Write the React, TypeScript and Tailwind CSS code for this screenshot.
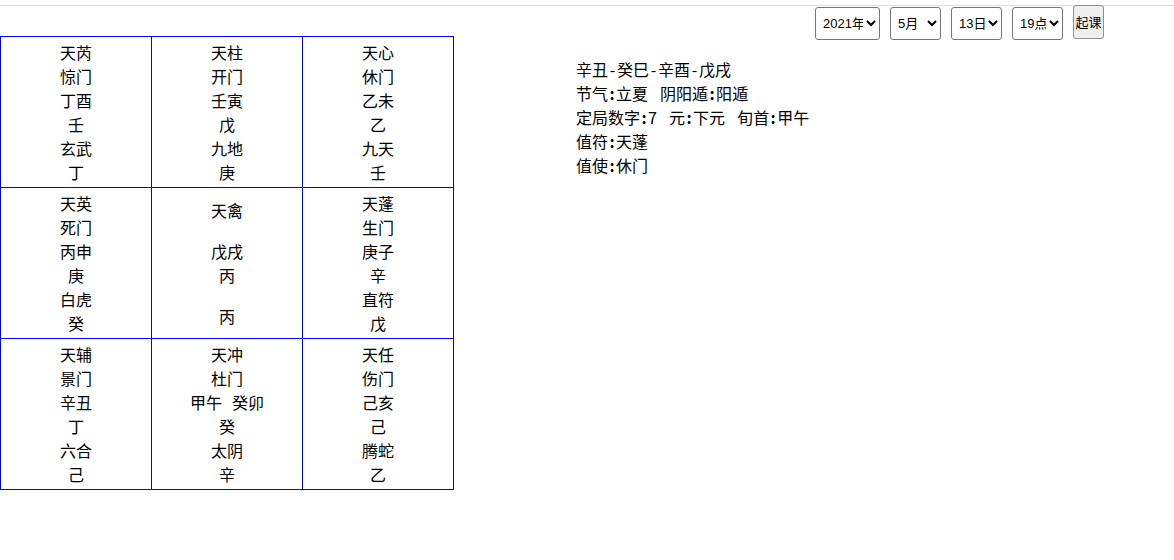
import React from 'react';

type Cell = { lines: string[]; center?: boolean };

const cells: Cell[] = [
  { lines: ['天芮', '惊门', '丁酉', '壬', '玄武', '丁'] },
  { lines: ['天柱', '开门', '壬寅', '戊', '九地', '庚'] },
  { lines: ['天心', '休门', '乙未', '乙', '九天', '壬'] },
  { lines: ['天英', '死门', '丙申', '庚', '白虎', '癸'] },
  { lines: ['天禽', '', '戊戌', '丙', '', '丙'], center: true },
  { lines: ['天蓬', '生门', '庚子', '辛', '直符', '戊'] },
  { lines: ['天辅', '景门', '辛丑', '丁', '六合', '己'] },
  { lines: ['天冲', '杜门', '甲午  癸卯', '癸', '太阴', '辛'] },
  { lines: ['天任', '伤门', '己亥', '己', '腾蛇', '乙'] },
];

const info = [
  '辛丑-癸巳-辛酉-戊戌',
  '节气:立夏  阴阳遁:阳遁',
  '定局数字:7  元:下元  旬首:甲午',
  '值符:天蓬',
  '值使:休门',
];

const selects = [
  { value: '2021年', w: 'w-[65px]' },
  { value: '5月', w: 'w-[51px]' },
  { value: '13日', w: 'w-[51px]' },
  { value: '19点', w: 'w-[51px]' },
];

// latin punctuation in the original renders wider than Noto's, so give it fixed slots
function Line({ text, narrow }: { text: string; narrow?: boolean }) {
  return (
    <>
      {text.split('').map((ch, i) => {
        if (ch === '-') return <span key={i} className="inline-block w-[9px] text-center">-</span>;
        if (ch === ':') return <span key={i} className="inline-block w-[8px] text-center font-bold">:</span>;
        if (ch === ' ')
          return <span key={i} className={narrow ? 'inline-block w-[5px]' : 'inline-block w-[6px]'} />;
        if (/[0-9]/.test(ch)) return <span key={i} className="inline-block w-[9px] text-center">{ch}</span>;
        return ch;
      })}
    </>
  );
}

function Pan() {
  return (
    <div className="mt-[30px] grid w-[454px] grid-cols-3 border-l border-t border-[#0000ff]">
      {cells.map((c, i) => (
        <div
          key={i}
          className="flex h-[151px] flex-col items-center justify-center border-b border-r border-[#0000ff] text-center leading-6"
        >
          {c.lines.map((l, j) =>
            l === '' && c.center ? (
              <div key={j} className="h-[17px]" />
            ) : (
              <div key={j}>
                <Line text={l} narrow />
              </div>
            )
          )}
        </div>
      ))}
    </div>
  );
}

export default function App() {
  return (
    <div
      className="h-[560px] w-[1174px] bg-white text-[16px] text-black"
      style={{ fontFamily: '"Noto Sans CJK SC", "Liberation Sans", sans-serif' }}
    >
      <div className="h-[5px]" />
      <div className="border-t border-[#dddddd]" />
      <div className="flex items-start">
        <Pan />
        <div className="ml-[122px] mt-[51px] whitespace-nowrap leading-6">
          {info.map((t) => (
            <div key={t}>
              <Line text={t} />
            </div>
          ))}
        </div>
        <div className="ml-auto mr-[70px] flex items-start gap-[10px]">
          {selects.map((s) => (
            <select
              key={s.value}
              defaultValue={s.value}
              className={`mt-[1px] h-[33px] ${s.w} rounded-[3px] border border-[#767676] bg-white pl-[3px] text-[13px]`}
              style={{ fontFamily: '"Liberation Sans", "Noto Sans CJK SC", sans-serif' }}
            >
              <option>{s.value}</option>
            </select>
          ))}
          <button className="-mt-[1px] h-[34px] w-[31px] rounded-[3px] border border-[#8f8f8f] bg-[#efefef] p-0 text-[13px]">
            起课
          </button>
        </div>
      </div>
    </div>
  );
}
